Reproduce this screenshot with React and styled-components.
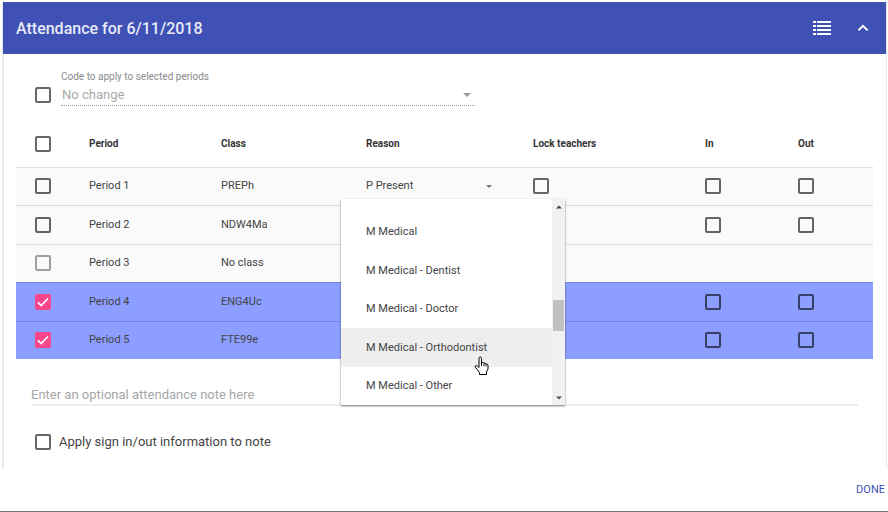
import React, { useState } from "react";
import styled, { createGlobalStyle, css } from "styled-components";

const GlobalStyle = createGlobalStyle`
  * { box-sizing: border-box; }
  body {
    margin: 0;
    background: #ffffff;
    color: #444444;
    font-family: Roboto, "Liberation Sans", sans-serif;
    font-size: 11px;
  }
  button, input, select { font: inherit; color: inherit; }
`;

const Page = styled.main`
  display: flex;
  flex-direction: column;
  padding-top: 2px;
  border-bottom: 1px solid #777777;
`;

const Card = styled.section`
  margin: 0 2px 0 3px;
  padding-bottom: 17px;
  box-shadow: inset 1px 0 #f0f0f0, 1px 0 #e9e9e9, -1px 0 #e4e4e4;
`;

const CardHeader = styled.header`
  display: flex;
  align-items: center;
  gap: 22px;
  height: 52px;
  padding: 0 13px;
  background: #3f51b5;
  color: #e8eaf6;
`;

const Title = styled.h1`
  flex: 1;
  margin: 0;
  padding-top: 1px;
  font-size: 16px;
  font-weight: 500;
  line-height: 24px;
`;

const IconButton = styled.button`
  display: flex;
  padding: 0;
  border: 0;
  background: none;
  color: #ffffff;
  cursor: pointer;
`;

const CodeBar = styled.div`
  display: flex;
  align-items: flex-end;
  gap: 10px;
  padding: 15px 32px 0;
  > span { margin-bottom: 3px; }
`;

const CodeField = styled.div`
  flex: 0 1 414px;
  display: flex;
  flex-direction: column;
  border-bottom: 1px dotted #999999;
`;

const CodeLabel = styled.label`
  color: #8a8a8a;
  font-size: 10px;
  line-height: 15px;
`;

const SelectBox = styled.div`
  display: grid;
  align-items: center;
  > * { grid-area: 1 / 1; }
  > svg { justify-self: end; pointer-events: none; }
  ${(p) => p.$inset && css`padding-right: ${p.$inset}px;`}
`;

const Select = styled.select`
  width: 100%;
  padding: 0;
  border: 0;
  background: none;
  appearance: none;
  opacity: 1;
  font-size: ${(p) => (p.$large ? 13 : 11)}px;
  line-height: 20px;
  ${(p) => p.$large && css`color: #a8a8a8; padding: 1px 1px 0;`}
`;

const TickBox = styled.span`
  display: inline-grid;
  width: 16px;
  height: 16px;
  vertical-align: middle;
  > * { grid-area: 1 / 1; }
  > svg { pointer-events: none; }
`;

const TickInput = styled.input`
  appearance: none;
  width: 16px;
  height: 16px;
  margin: 0;
  border: 2px solid rgba(0, 0, 0, 0.6);
  border-radius: 2px;
  &:disabled { border-color: rgba(0, 0, 0, 0.36); }
  &:checked { border-color: #f8468c; background: #f8468c; }
`;

const Table = styled.table`
  width: calc(100% - 26px);
  margin: 14px 13px 0;
  border-collapse: collapse;
  table-layout: fixed;
`;

const Col = styled.col`
  width: ${(p) => p.$w}px;
`;

const HeadCell = styled.th`
  height: 47px;
  padding: 0 0 0 ${(p) => (p.$first ? 19 : 0)}px;
  color: #333333;
  font-size: 10px;
  font-weight: 700;
  line-height: 16px;
  text-align: left;
`;

const Row = styled.tr`
  height: 39px;
  background: ${(p) => (p.$selected ? "#8c9eff" : "#fafafa")};
  box-shadow: inset 0 1px ${(p) => (p.$selected ? "#7586dc" : "#dddddd")};
  &:nth-child(odd) { height: 38px; }
`;

const Cell = styled.td`
  position: ${(p) => (p.$anchor ? "relative" : "static")};
  padding: 0 0 0 ${(p) => (p.$first ? 19 : 0)}px;
  line-height: 16px;
`;

const Menu = styled.div`
  position: absolute;
  z-index: 2;
  top: 32px;
  left: -25px;
  display: flex;
  width: 224px;
  height: 206px;
  background: #ffffff;
  box-shadow: 0 1px 2px rgba(0, 0, 0, 0.5);
`;

const Options = styled.div`
  flex: 1;
  display: flex;
  flex-direction: column;
  padding-top: 14px;
  overflow: hidden;
`;

const Option = styled.button`
  flex: none;
  height: 38px;
  padding: 0 25px;
  border: 0;
  background: ${(p) => (p.$active ? "#eeeeee" : "#ffffff")};
  text-align: left;
  &:nth-child(even) { height: 39px; }
`;

const ScrollTrack = styled.div`
  display: flex;
  flex-direction: column;
  align-items: center;
  width: 13px;
  padding: 6px 0 5px;
  background: #f1f1f1;
`;

const ScrollThumb = styled.div`
  width: 11px;
  height: 31px;
  margin: 91px 0 auto;
  background: #c1c1c1;
`;

const Pointer = styled.svg`
  position: absolute;
  top: 157px;
  left: 133px;
`;

const NoteInput = styled.input`
  display: block;
  width: calc(100% - 56px);
  height: 22px;
  margin: 25px 28px 0;
  padding: 1px 0 0;
  border: 0;
  border-bottom: 2px solid #eeeeee;
  background: none;
  font-size: 13px;
  &::placeholder { color: #a6a6a6; opacity: 1; }
`;

const NoteOption = styled.label`
  display: flex;
  align-items: center;
  gap: 8px;
  margin: 26px 32px 0;
  font-size: 13px;
  line-height: 20px;
`;

const Actions = styled.footer`
  display: flex;
  justify-content: flex-end;
  padding: 11px 3px;
`;

const TextButton = styled.button`
  padding: 0;
  border: 0;
  background: none;
  color: #3f51b5;
  font-size: 11px;
  line-height: 20px;
`;

const ListIcon = () => (
  <svg width="18" height="14" viewBox="0 0 18 14" fill="currentColor" aria-hidden="true">
    {[0, 4, 8, 12].map((y) => (
      <path key={y} d={`M0 ${y}h3v2H0zM4 ${y}h14v2H4z`} />
    ))}
  </svg>
);

const ChevronIcon = () => (
  <svg width="20" height="14" viewBox="0 0 20 14" fill="none" stroke="currentColor" strokeWidth="2" aria-hidden="true">
    <path d="M5.4 9.4L10 4.8l4.6 4.6" />
  </svg>
);

const Triangle = ({ width, height, color, up }) => (
  <svg width={width} height={height} viewBox="0 0 8 4" fill={color} aria-hidden="true">
    <path d={up ? "M0 4h8L4 0z" : "M0 0h8L4 4z"} />
  </svg>
);

function Checkbox({ initial = false, ...rest }) {
  const [checked, setChecked] = useState(initial);
  return (
    <TickBox>
      <TickInput type="checkbox" checked={checked} onChange={(e) => setChecked(e.target.checked)} {...rest} />
      {checked && (
        <svg width="16" height="16" viewBox="0 0 16 16" fill="none" stroke="#ffffff" strokeWidth="1.7" aria-hidden="true">
          <path d="M3 8.4l3.2 3.2L13 4.5" />
        </svg>
      )}
    </TickBox>
  );
}

function ReasonMenu() {
  const reasons = ["M Medical", "M Medical - Dentist", "M Medical - Doctor", "M Medical - Orthodontist", "M Medical - Other"];
  return (
    <Menu>
      <Options role="listbox" aria-label="Reason for Period 1">
        {reasons.map((reason, i) => (
          <Option key={reason} type="button" role="option" aria-selected={i === 3} $active={i === 3}>
            {reason}
          </Option>
        ))}
      </Options>
      <ScrollTrack>
        <Triangle width={6} height={4} color="#404040" up />
        <ScrollThumb />
        <Triangle width={6} height={4} color="#505050" />
      </ScrollTrack>
      <Pointer width="16" height="20" viewBox="0 0 16 20" aria-hidden="true">
        <path
          d="M5 11V2.5Q5 1 6.2 1T7.5 2.5V7Q8.8 5.8 10 7.2 11.2 6.5 12 8 13.8 7.6 14 9.5V13L12.5 16V18.5H5.5V16.5L3.6 14 1.2 11.2Q.9 9.6 2.4 9.3L5 11.5z"
          fill="#ffffff"
          stroke="#000000"
          strokeWidth="1"
        />
        <path d="M7.5 7v3M10 7.5V10M12 8.5V10.5" stroke="#000000" fill="none" />
      </Pointer>
    </Menu>
  );
}

const columns = [73, 132, 145, 167, 172, 93, 75];

const periods = [
  { name: "Period 1", className: "PREPh", reason: "P Present", lock: true, times: true },
  { name: "Period 2", className: "NDW4Ma", times: true },
  { name: "Period 3", className: "No class", disabled: true },
  { name: "Period 4", className: "ENG4Uc", times: true, selected: true },
  { name: "Period 5", className: "FTE99e", times: true, selected: true },
];

export default function App() {
  return (
    <Page>
      <GlobalStyle />
      <Card>
        <CardHeader>
          <Title>Attendance for 6/11/2018</Title>
          <IconButton type="button" aria-label="List view"><ListIcon /></IconButton>
          <IconButton type="button" aria-label="Collapse"><ChevronIcon /></IconButton>
        </CardHeader>
        <CodeBar>
          <Checkbox aria-label="Apply code" />
          <CodeField>
            <CodeLabel htmlFor="code">Code to apply to selected periods</CodeLabel>
            <SelectBox $inset={4}>
              <Select id="code" $large disabled>
                <option>No change</option>
              </Select>
              <Triangle width={8} height={4} color="#999999" />
            </SelectBox>
          </CodeField>
        </CodeBar>
        <Table>
          <colgroup>
            {columns.map((w, i) => <Col key={i} $w={w} />)}
          </colgroup>
          <thead>
            <tr>
              <HeadCell $first><Checkbox aria-label="Select all periods" /></HeadCell>
              <HeadCell>Period</HeadCell>
              <HeadCell>Class</HeadCell>
              <HeadCell>Reason</HeadCell>
              <HeadCell>Lock teachers</HeadCell>
              <HeadCell>In</HeadCell>
              <HeadCell>Out</HeadCell>
            </tr>
          </thead>
          <tbody>
            {periods.map((p) => (
              <Row key={p.name} $selected={p.selected}>
                <Cell $first>
                  <Checkbox initial={p.selected} disabled={p.disabled} aria-label={`Select ${p.name}`} />
                </Cell>
                <Cell>{p.name}</Cell>
                <Cell>{p.className}</Cell>
                <Cell $anchor={Boolean(p.reason)}>
                  {p.reason && (
                    <>
                      <SelectBox $inset={41}>
                        <Select aria-label={`Reason for ${p.name}`}>
                          <option>{p.reason}</option>
                        </Select>
                        <Triangle width={6} height={3} color="#777777" />
                      </SelectBox>
                      <ReasonMenu />
                    </>
                  )}
                </Cell>
                <Cell>{p.lock && <Checkbox aria-label={`Lock teachers for ${p.name}`} />}</Cell>
                <Cell>{p.times && <Checkbox aria-label={`${p.name} in`} />}</Cell>
                <Cell>{p.times && <Checkbox aria-label={`${p.name} out`} />}</Cell>
              </Row>
            ))}
          </tbody>
        </Table>
        <NoteInput type="text" aria-label="Attendance note" placeholder="Enter an optional attendance note here" />
        <NoteOption>
          <Checkbox />
          Apply sign in/out information to note
        </NoteOption>
      </Card>
      <Actions>
        <TextButton type="button">DONE</TextButton>
      </Actions>
    </Page>
  );
}
